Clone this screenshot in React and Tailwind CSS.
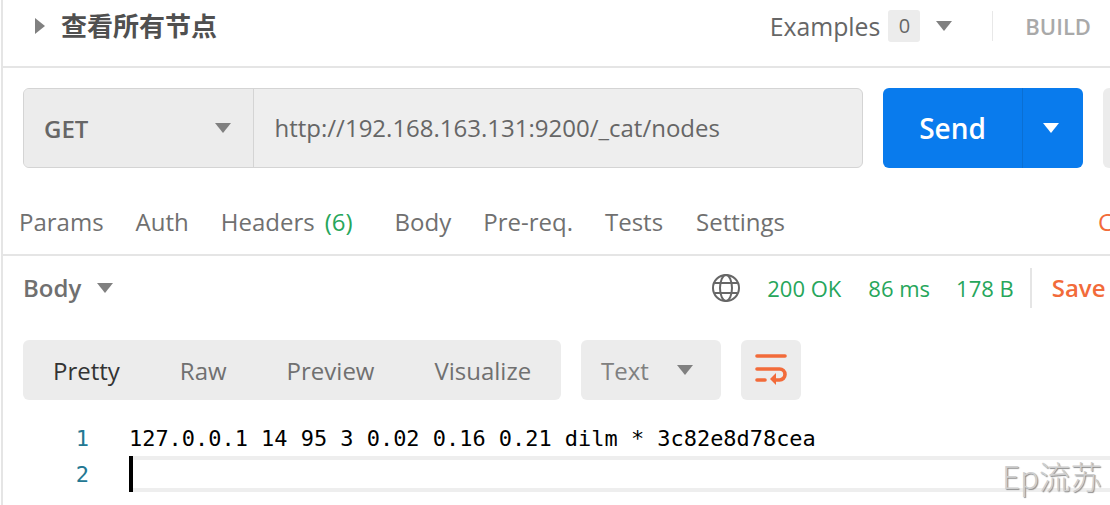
const Caret = ({ className = "", color = "#808080" }) => (
  <svg width="16" height="10" viewBox="0 0 16 10" className={className}>
    <polygon points="0,0 16,0 8,10" fill={color} />
  </svg>
);

const Globe = () => (
  <svg width="30" height="30" viewBox="0 0 30 30" fill="none" stroke="#666" strokeWidth="2">
    <circle cx="15" cy="15" r="13" />
    <ellipse cx="15" cy="15" rx="6" ry="13" />
    <path d="M3.5 10h23M3.5 20h23" />
  </svg>
);

const Wrap = () => (
  <svg width="32" height="32" viewBox="0 0 32 32" fill="none" stroke="#f26b3a" strokeWidth="3.6" strokeLinecap="round">
    <path d="M2 2h28" />
    <path d="M2 15h22.500a5.500 5.500 0 0 1 0 11h-5" />
    <path d="M2 26h8" />
    <polygon points="21,19 21,31 15,25" fill="#f26b3a" stroke="none" />
  </svg>
);

const Tab = ({ children, className = "text-[#707070]" }) => (
  <span className={"text-[24px] leading-[32px] whitespace-nowrap shrink-0 " + className}>{children}</span>
);

export default function App() {
  return (
    <div
      className="relative ml-[1px] w-[1109px] h-[505px] overflow-hidden bg-white border-l-2 border-[#e5e5e5] text-[#666] font-['Open_Sans','Noto_Sans_CJK_SC',sans-serif]"
    >
      {/* Title bar */}
      <div className="h-[68px] border-b-2 border-[#e5e5e5] flex items-center pb-[14px] pl-[32px]">
        <svg width="10" height="16" viewBox="0 0 10 16" className="mr-[16px]">
          <polygon points="0,0 10,8 0,16" fill="#808080" />
        </svg>
        <span className="text-[26px] font-bold leading-[32px] text-[#505050]">查看所有节点</span>
        <div className="ml-auto flex items-center">
          <span className="text-[24.800px] leading-[32px] text-[#666]">Examples</span>
          <span className="ml-[8px] w-[32px] h-[32px] rounded-[3px] bg-[#ececec] flex items-center justify-center text-[20px] text-[#666]">0</span>
          <Caret className="ml-[16px]" />
          <span className="ml-[40px] w-px h-[30px] bg-[#e8e8e8]" />
          <span className="ml-[32px] mr-[19px] text-[22px] font-semibold leading-[32px] text-[#a9a9a9]">BUILD</span>
        </div>
      </div>

      {/* Request row */}
      <div className="mt-[20px] ml-[20px] flex h-[80px] w-[1200px]">
        <div className="w-[840px] flex rounded-[6px] border border-[#d4d4d4] bg-[#eeeeee] overflow-hidden">
          <div className="w-[230px] shrink-0 border-r border-[#d4d4d4] bg-[#ececec] flex items-center pl-[20px] pr-[22px]">
            <span className="pt-[2px] text-[24px] font-semibold leading-[32px] text-[#666]">GET</span>
            <Caret className="ml-auto" />
          </div>
          <div className="flex-1 flex items-center pl-[20.500px] text-[24px] leading-[32px] text-[#666]">
            http://192.168.163.131:9200/_cat/nodes
          </div>
        </div>
        <div className="ml-[20px] w-[200px] rounded-[6px] bg-[#097bed] flex text-white">
          <div className="w-[140px] flex items-center justify-center text-[28px] font-semibold leading-[32px] border-r border-[#0a6fd3]">Send</div>
          <div className="flex-1 flex items-center justify-center pr-[4px]">
            <Caret color="#ffffff" />
          </div>
        </div>
        <div className="ml-[20px] w-[80px] rounded-[6px] bg-[#ececec]" />
      </div>

      {/* Request tabs */}
      <div className="h-[88px] border-b-2 border-[#e5e5e5] flex items-center pt-[21px] pl-[16px]">
        <Tab>Params</Tab>
        <Tab className="ml-[32px] text-[#707070]">Auth</Tab>
        <Tab className="ml-[32px] text-[#707070]">Headers<span className="ml-[10px] text-[#26a65b]">(6)</span></Tab>
        <Tab className="ml-[42px] text-[#707070]">Body</Tab>
        <Tab className="ml-[32px] text-[#707070]">Pre-req.</Tab>
        <Tab className="ml-[32px] text-[#707070]">Tests</Tab>
        <Tab className="ml-[33px] text-[#707070]">Settings</Tab>
        <Tab className="ml-[313px] text-[#f26b3a]">Cookies</Tab>
      </div>

      {/* Response bar */}
      <div className="h-[67px] flex items-center pl-[20px] pb-[4px]">
        <span className="text-[24px] font-semibold leading-[32px] text-[#707070]">Body</span>
        <Caret className="ml-[16px]" />
        <span className="ml-[598px]"><Globe /></span>
        <span className="ml-[26px] text-[22px] leading-[32px] text-[#26a65b]">200 OK</span>
        <span className="ml-[27px] text-[22px] leading-[32px] text-[#26a65b]">86 ms</span>
        <span className="ml-[26px] text-[22px] leading-[32px] text-[#26a65b]">178 B</span>
        <span className="ml-[16px] w-[2px] h-[40px] bg-[#e5e5e5]" />
        <span className="ml-[20px] text-[24px] font-semibold leading-[32px] whitespace-nowrap text-[#f26b3a]">Save</span>
      </div>

      {/* Response toolbar */}
      <div className="mt-[17px] ml-[20px] flex h-[60px]">
        <div className="w-[538px] rounded-[6px] bg-[#ececec] flex items-center pl-[30px] pt-[2px]">
          <Tab className="text-[#333]">Pretty</Tab>
          <Tab className="ml-[60px] text-[#707070]">Raw</Tab>
          <Tab className="ml-[60px] text-[#707070]">Preview</Tab>
          <Tab className="ml-[60px] text-[#707070]">Visualize</Tab>
        </div>
        <div className="ml-[20px] w-[140px] rounded-[6px] bg-[#ececec] flex items-center pl-[20px] pr-[28px]">
          <Tab className="pt-[2px] text-[#808080]">Text</Tab>
          <Caret className="ml-auto" />
        </div>
        <div className="ml-[20px] w-[60px] rounded-[6px] bg-[#ececec] flex items-center justify-center">
          <Wrap />
        </div>
      </div>

      {/* Code */}
      <div className="mt-[20px] text-[22px] leading-[38px] font-['DejaVu_Sans_Mono','Liberation_Mono',monospace]">
        <div className="flex h-[36px]">
          <span className="w-[86px] text-right text-[#237893]">1</span>
          <span className="ml-[40px] text-[21.950px] text-[#000] whitespace-pre">127.0.0.1 14 95 3 0.02 0.16 0.21 dilm * 3c82e8d78cea</span>
        </div>
        <div className="flex h-[36px]">
          <span className="w-[86px] text-right text-[#237893]">2</span>
          <div className="ml-[40px] w-[4px] bg-black" />
          <div className="flex-1 border-y-4 border-[#eeeeee]" />
        </div>
      </div>

      {/* Watermark */}
      <span className="absolute right-[8px] bottom-[12px] text-[31.500px] leading-[36px] font-light text-[#cfcfcf] [text-shadow:1px_1px_1px_#8a8a8a] font-['Noto_Sans_CJK_SC',sans-serif]">Ep流苏</span>
    </div>
  );
}
